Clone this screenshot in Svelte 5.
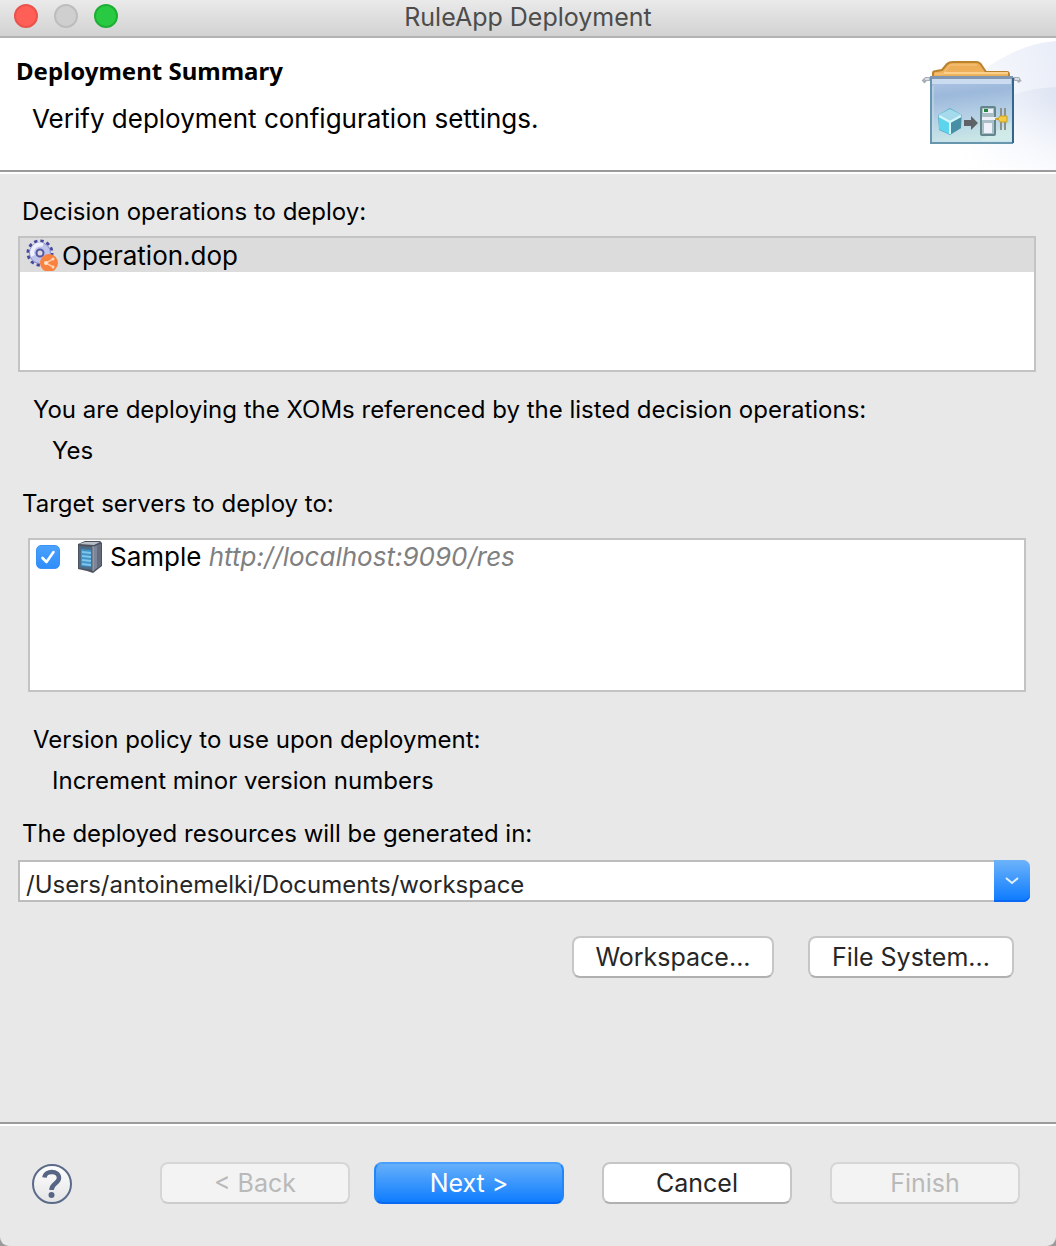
<script>
  let selected = $state(true);
  let folder = $state('/Users/antoinemelki/Documents/workspace');
</script>

<main class="window">
  <header class="titlebar">
    <div class="lights">
      <button class="light close" aria-label="Close"></button>
      <button class="light minimize" aria-label="Minimize" disabled></button>
      <button class="light zoom" aria-label="Zoom"></button>
    </div>
    <div class="title">RuleApp Deployment</div>
  </header>

  <section class="banner">
    <div class="banner-text">
      <h1>Deployment Summary</h1>
      <p>Verify deployment configuration settings.</p>
    </div>
    <svg class="art" viewBox="0 0 156 132" aria-hidden="true">
      <defs>
        <linearGradient id="sweep" x1="0" y1="0.5" x2="1" y2="0.2">
          <stop offset="0" stop-color="#fff" /><stop offset="0.4" stop-color="#f5f7fc" /><stop offset="1" stop-color="#eaeef8" />
        </linearGradient>
        <linearGradient id="sweep2" x1="0" y1="0.6" x2="1" y2="0.1">
          <stop offset="0" stop-color="#fff" /><stop offset="0.5" stop-color="#f1f4fb" /><stop offset="1" stop-color="#dfe5f3" />
        </linearGradient>
        <linearGradient id="fade" x1="0" y1="0" x2="0" y2="1">
          <stop offset="0.5" stop-color="#fff" stop-opacity="0" /><stop offset="1" stop-color="#fff" stop-opacity="0.7" />
        </linearGradient>
        <linearGradient id="box" x1="0" y1="0" x2="0.15" y2="1">
          <stop offset="0" stop-color="#b3c8e6" /><stop offset="0.3" stop-color="#9cb8db" />
          <stop offset="0.6" stop-color="#b3cde4" /><stop offset="1" stop-color="#c9e6e6" />
        </linearGradient>
        <linearGradient id="tab" x1="0" y1="0" x2="0" y2="1">
          <stop offset="0" stop-color="#edaa50" /><stop offset="0.7" stop-color="#efb35f" />
          <stop offset="1" stop-color="#d69a3e" />
        </linearGradient>
      </defs>
      <path d="M50 132V64C80 28 118 6 156 3V132Z" fill="url(#sweep)" />
      <path d="M50 132V100C85 64 120 50 156 49V132Z" fill="url(#sweep2)" />
      <path d="M50 0H156V132H50Z" fill="url(#fade)" />
      <path d="M33 42V35Q33 33 36 33L42 32L47 26Q49 24 53 24H76Q80 24 82 28L86 34H107Q109 34 109 37V42Z" fill="url(#tab)" stroke="#b9822e" stroke-width="2" />
      <path d="M35 36H43L50 27H77" fill="none" stroke="#f6c785" stroke-width="1" />
      <path d="M44 35H108" stroke="#fbd08c" stroke-width="2" />
      <path d="M31 41H26L23 44" fill="none" stroke="#a9adb9" stroke-width="4" />
      <path d="M113 41H118L120 44" fill="none" stroke="#a9adb9" stroke-width="4" />
      <path d="M25 41H29M115 41H119" stroke="#d9dbe4" stroke-width="2" />
      <path d="M30 39H113V105H30Z" fill="url(#box)" />
      <path d="M30 38H113V41H30Z" fill="#8197b1" />
      <path d="M31 41H111V46H31Z" fill="#cbdcf0" />
      <path d="M31 40V105H113" fill="none" stroke="#6796ad" stroke-width="2" />
      <path d="M113 40V105" stroke="#35658d" stroke-width="2" />
      <path d="M33 48V103H110" fill="none" stroke="#c8dced" stroke-width="1" />
      <path d="M111 84L80 103H111Z" fill="#d8efeb" opacity="0.5" />
      <path d="M38 77L50 70L62 77L61 90L50 97L39 92Z" fill="#55aec2" />
      <path d="M38 77L50 71L62 77L50 84Z" fill="#a4daec" />
      <path d="M39 79L49 84V96L39 91Z" fill="#5dd4ee" />
      <path d="M51 84L61 79V90L51 96Z" fill="#468fa5" />
      <path d="M39 78L50 84L61 78M50 84V96" fill="none" stroke="#d5f6fb" stroke-width="2" />
      <path d="M64 82H71V78L78 85L71 92V88H64Z" fill="#5e6267" />
      <rect x="81" y="69" width="14" height="28" rx="1" fill="#a9bfc5" stroke="#62868b" stroke-width="2" />
      <path d="M83 71H93V75H83ZM82 79H96V82H82ZM84 85H92V95H84Z" fill="#eef1f9" />
      <rect x="84" y="71" width="4" height="3" fill="#26853d" />
      <path d="M101 70V92M105 70V92" stroke="#8b918f" stroke-width="2" />
      <path d="M95 81H100" stroke="#d1a326" stroke-width="2" />
      <path d="M100 78H107V84H100L98 81Z" fill="#f3cb45" stroke="#c9a029" />
    </svg>
  </section>

  <section class="content">
    <h2>Decision operations to deploy:</h2>
    <ul class="list operations">
      <li>
        <svg class="gear" viewBox="0 0 32 32" aria-hidden="true">
          <circle cx="14" cy="14" r="12" fill="none" stroke="#46489c" stroke-width="3" stroke-dasharray="3.3 2.983" />
          <circle cx="14" cy="14" r="10.500" fill="#bfc4ea" stroke="#8a8fce" stroke-width="1" />
          <path d="M7 17A8 8 0 0 1 17 6" fill="none" stroke="#eef0fd" stroke-width="4" />
          <circle cx="14" cy="14" r="3.500" fill="#dcdcdc" stroke="#5557a6" stroke-width="2" />
          <circle cx="23" cy="24" r="9" fill="#fa823f" />
          <path d="M27 20L20 24L27 28" fill="none" stroke="#ffc7a4" stroke-width="1.500" />
          <circle cx="20" cy="24" r="2" fill="#ffe3d0" />
          <circle cx="27" cy="20" r="1.500" fill="#ffd9c0" />
          <circle cx="27" cy="28" r="1.500" fill="#ffd9c0" />
        </svg>
        <span>Operation.dop</span>
      </li>
    </ul>

    <div class="fact">
      <h3>You are deploying the XOMs referenced by the listed decision operations:</h3>
      <p>Yes</p>
    </div>

    <h2>Target servers to deploy to:</h2>
    <ul class="list servers">
      <li>
        <label>
          <span class="tick">
            <input type="checkbox" bind:checked={selected} />
            {#if selected}
              <svg viewBox="0 0 24 24" aria-hidden="true"><path d="M6.500 13L10.500 17L17.500 7" fill="none" stroke="#fff" stroke-width="2.600" stroke-linecap="round" stroke-linejoin="round" /></svg>
            {/if}
          </span>
          <svg class="server" viewBox="0 0 24 32" aria-hidden="true">
            <path d="M0 3L7 0H22L24 2V25L15 32L9 30L0 28Z" fill="#4d535e" />
            <path d="M1 3L7 1H22L16 4Z" fill="#b9bec7" />
            <path d="M15 6L23 3V24L15 30Z" fill="#7d8698" />
            <path d="M19 5L23 3V24L19 27Z" fill="#636b7c" />
            <path d="M1 5L14 6V29L1 27Z" fill="#4c6c88" />
            <path d="M3 8L13 9V26L3 25Z" fill="#4193c6" />
            <path d="M4 11L13 12M4 15L13 16M4 19L13 20M4 23L13 24" stroke="#7fc6ee" stroke-width="2" />
            <path d="M15 5V30" stroke="#a4adba" stroke-width="1" />
          </svg>
          <span>Sample <em>http://localhost:9090/res</em></span>
        </label>
      </li>
    </ul>

    <div class="fact policy">
      <h3>Version policy to use upon deployment:</h3>
      <p>Increment minor version numbers</p>
    </div>

    <label class="folder-label" for="folder">The deployed resources will be generated in:</label>
    <div class="combo">
      <select id="folder" bind:value={folder}>
        <option>/Users/antoinemelki/Documents/workspace</option>
      </select>
      <span class="arrow">
        <svg viewBox="0 0 16 10" aria-hidden="true"><path d="M2 2L8 7L14 2" fill="none" stroke="#e3f0ff" stroke-width="2" /></svg>
      </span>
    </div>

    <div class="browse">
      <button class="push workspace">Workspace...</button>
      <button class="push filesystem">File System...</button>
    </div>
  </section>

  <footer>
    <button class="help" aria-label="Help">
      <svg viewBox="0 0 40 40" aria-hidden="true">
        <defs>
          <linearGradient id="disc" x1="0" y1="0" x2="0" y2="1"><stop offset="0" stop-color="#fff" /><stop offset="1" stop-color="#e4e4e6" /></linearGradient>
        </defs>
        <circle cx="20" cy="20" r="19" fill="url(#disc)" stroke="#5a6b89" stroke-width="2" />
        <path d="M12.500 13.500C13 6 27 6 27 14C27 19.500 19.500 19 19.500 26" fill="none" stroke="#566684" stroke-width="4.500" />
        <circle cx="19.500" cy="31" r="3" fill="#566684" />
      </svg>
    </button>
    <div class="actions">
      <button class="push" disabled>&lt; Back</button>
      <button class="push primary">Next &gt;</button>
      <div class="finish">
        <button class="push">Cancel</button>
        <button class="push" disabled>Finish</button>
      </div>
    </div>
  </footer>
</main>

<style>
  :global(body) { margin: 0; background: #9b9b9b; }
  .window {
    box-sizing: border-box;
    min-height: 100vh;
    display: flex;
    flex-direction: column;
    overflow: hidden;
    border-radius: 0 0 9px 9px;
    background: #e8e8e8;
    color: #000;
    font: 24px/30px Inter, "Liberation Sans", sans-serif;
  }
  h1, h2, h3, p, ul { margin: 0; padding: 0; font: inherit; }
  ul { list-style: none; }
  button { font: inherit; padding: 0; border: 0; }

  .titlebar {
    display: grid;
    grid-template-columns: 1fr auto 1fr;
    align-items: center;
    height: 36px;
    padding: 0 14px;
    background: linear-gradient(#eaeaea, #d2d2d2);
    border-bottom: 2px solid #b3b3b3;
  }
  .lights { display: flex; gap: 16px; padding-bottom: 4px; }
  .light { box-sizing: border-box; width: 24px; height: 24px; border: 2px solid; border-radius: 50%; }
  .close { background: #ff5f57; border-color: #e9534c; }
  .minimize { background: #cfcfcf; border-color: #bdbdbd; }
  .zoom { background: #28ca42; border-color: #1fae35; }
  .title { padding-bottom: 2px; color: #4c4c4c; font-size: 25px; }

  .banner {
    display: flex;
    justify-content: space-between;
    height: 132px;
    background: #fff;
    border-bottom: 2px solid #9b9b9b;
  }
  .banner-text { padding: 18px 16px; }
  .banner h1 { font: bold 24px/30px "Noto Sans", sans-serif; }
  .banner p { padding: 18px 16px 0; font-size: 26px; }
  .art { width: 156px; height: 132px; }

  .content { flex: 1; padding: 23px 20px 0 18px; border-top: 2px solid #fff; }
  h2, .folder-label { display: block; padding-left: 4px; }
  .list { box-sizing: border-box; background: #fff; border: 2px solid #c3c3c3; font-size: 26px; }
  .operations { height: 136px; margin: 9px 0 23px; }
  .operations li {
    display: flex;
    align-items: center;
    gap: 4px;
    height: 34px;
    padding: 0 6px;
    background: #dcdcdc;
  }
  .operations span { padding-top: 2px; }
  .gear { width: 32px; height: 32px; }
  .fact { padding-left: 15px; margin-bottom: 23px; }
  .fact p { padding: 11px 19px 0; }
  .servers { height: 154px; margin: 19px 10px 33px; }
  .servers label { display: flex; align-items: center; height: 34px; padding: 0 6px; }
  .tick { display: grid; width: 24px; height: 24px; margin-right: 18px; }
  .tick > * { grid-area: 1 / 1; width: 24px; height: 24px; }
  .tick input {
    appearance: none;
    box-sizing: border-box;
    margin: 0;
    background: #fff;
    border: 1px solid #b5b5b5;
    border-radius: 5px;
  }
  .tick input:checked { background: linear-gradient(#4ba2fc, #2f8dfb); border-color: #3c93f5; }
  .tick svg { pointer-events: none; }
  .server { width: 24px; height: 32px; margin-right: 8px; }
  em { color: #808080; }
  .policy { margin-bottom: 23px; }

  .combo { display: grid; grid-template-columns: 1fr 36px; height: 42px; margin: 11px 6px 34px 0; }
  select {
    grid-area: 1 / 1 / 2 / 3;
    appearance: none;
    box-sizing: border-box;
    width: 100%;
    padding: 8px 40px 0 6px;
    background: #fff;
    border: 2px solid #bdbdbd;
    border-radius: 0 7px 7px 0;
    color: #262626;
    font: inherit;
  }
  .arrow {
    grid-area: 1 / 2;
    display: grid;
    place-items: center;
    background: linear-gradient(#6db3fa, #0a7aff);
    border-radius: 0 7px 7px 0;
    box-shadow: inset 0 -2px #0a68f5;
    pointer-events: none;
  }
  .arrow svg { width: 16px; height: 10px; }

  .push {
    box-sizing: border-box;
    width: 190px;
    height: 42px;
    background: #fff;
    border: 2px solid #c6c6c6;
    border-bottom-color: #b0b0b0;
    border-radius: 8px;
    color: #262626;
    font-size: 25px;
    line-height: 30px;
  }
  .push:disabled { background: #f3f3f3; border-color: #d6d6d6; border-bottom-color: #cccccc; color: #b9b9b9; }
  .primary { background: linear-gradient(#6ab2fa, #0a7aff); background-origin: border-box; border-color: #4a9ffa #2286fb #0a69f2; color: #fff; }
  .browse { display: flex; justify-content: flex-end; gap: 34px; padding-right: 22px; }
  .workspace { width: 202px; }
  .filesystem { width: 206px; }

  footer {
    box-sizing: border-box;
    display: flex;
    justify-content: space-between;
    height: 124px;
    padding: 38px 36px 0 32px;
    border-top: 2px solid #9b9b9b;
    box-shadow: inset 0 2px #fff;
  }
  .help { width: 40px; height: 40px; margin-top: 2px; background: none; }
  .help svg { display: block; }
  .actions { display: flex; gap: 24px; }
  .finish { display: flex; gap: 38px; padding-left: 14px; }
</style>
